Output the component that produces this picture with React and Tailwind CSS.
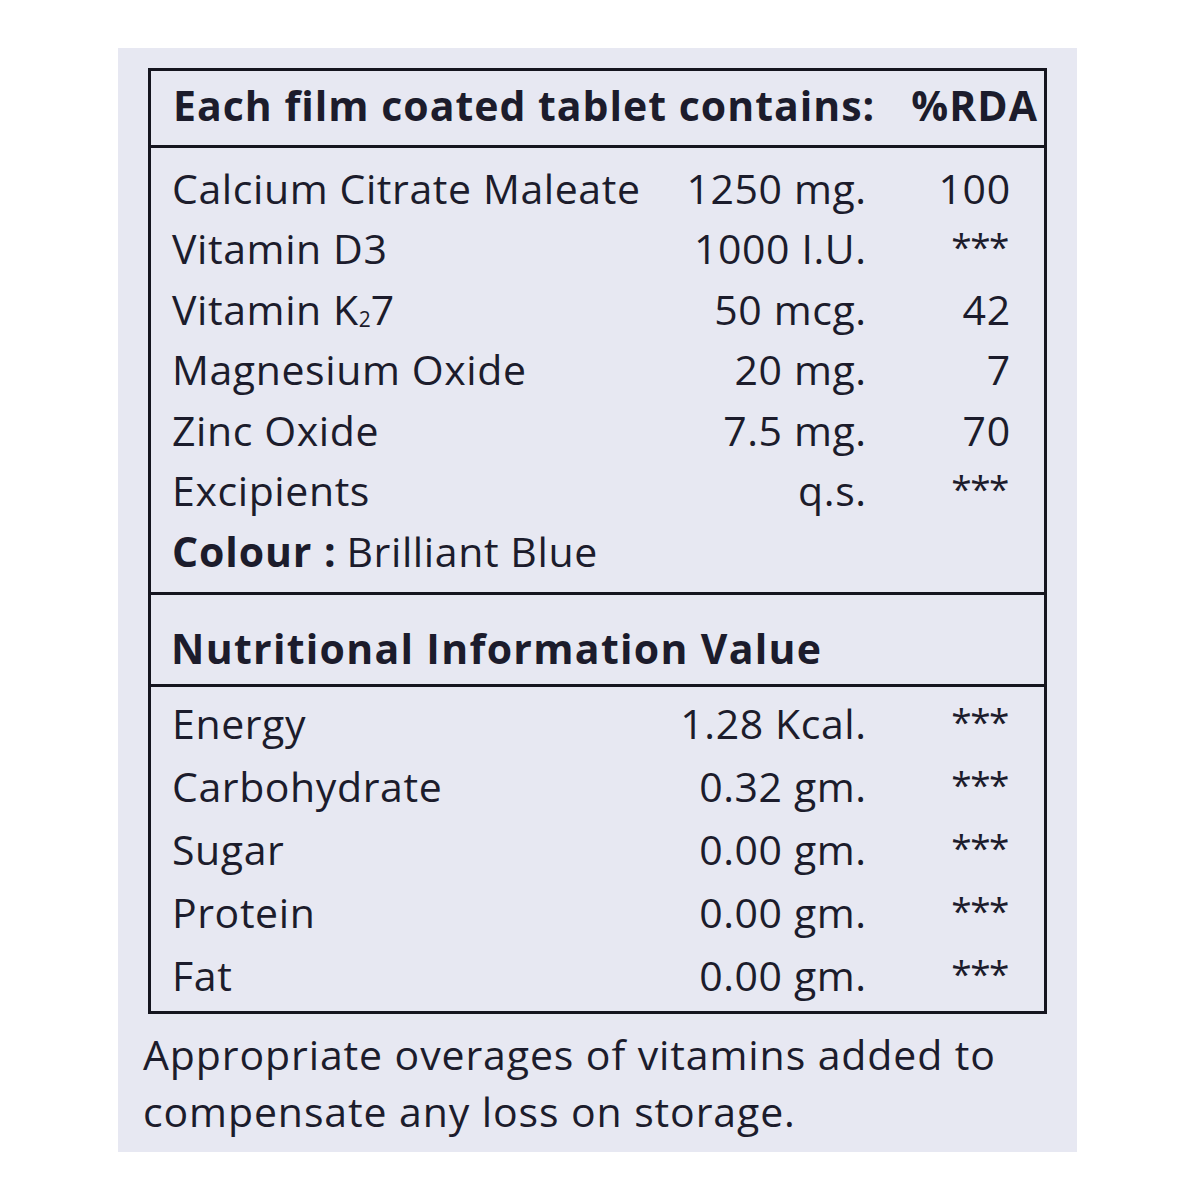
import React from "react";

const font = { fontFamily: '"Open Sans", "Noto Sans", sans-serif' };

const ingredients = [
  ["Calcium Citrate Maleate", "1250 mg.", "100"],
  ["Vitamin D3", "1000 I.U.", "***"],
  ["K27", "50 mcg.", "42"],
  ["Magnesium Oxide", "20 mg.", "7"],
  ["Zinc Oxide", "7.5 mg.", "70"],
  ["Excipients", "q.s.", "***"],
];

const nutrition = [
  ["Energy", "1.28 Kcal.", "***"],
  ["Carbohydrate", "0.32 gm.", "***"],
  ["Sugar", "0.00 gm.", "***"],
  ["Protein", "0.00 gm.", "***"],
  ["Fat", "0.00 gm.", "***"],
];

function Name({ n }) {
  if (n === "K27") {
    return (
      <span>
        Vitamin K<span className="text-[21px] align-[-2px] tracking-normal">2</span>7
      </span>
    );
  }
  return <span>{n}</span>;
}

function Row({ r, h }) {
  const stars = r[2] === "***";
  return (
    <div className={`grid grid-cols-[1fr_auto_144px] items-center ${h}`}>
      <Name n={r[0]} />
      <span className="text-right mr-[-0.7px]">{r[1]}</span>
      {stars ? (
        <span className="text-right text-[37px] tracking-[-1.5px] mr-[2px] -mt-[6px]">***</span>
      ) : (
        <span className="text-right mr-[-0.7px]">{r[2]}</span>
      )}
    </div>
  );
}

export default function App() {
  return (
    <div className="w-[1200px] h-[1200px] bg-white pt-[48px] pl-[118px]" style={font}>
      <div className="w-[959px] h-[1104px] bg-[#e7e8f2] pt-[20px] pl-[30px] text-[#1c1c2c]">
        <div className="w-[899px] border-[3px] border-[#15151f]">
          <div className="h-[77px] flex items-center justify-between pl-[22px] pr-[6px] pb-[4px] text-[41px] font-bold tracking-[1px] border-b-[3px] border-[#15151f]">
            <span>Each film coated tablet contains:</span>
            <span>%RDA</span>
          </div>
          <div className="pl-[21px] pr-[34px] pt-[10px] pb-[10px] text-[41px] leading-none tracking-[0.6px]">
            {ingredients.map((r) => (
              <Row key={r[0]} r={r} h="h-[60.5px]" />
            ))}
            <div className="h-[60.5px] flex items-center">
              <span className="font-bold tracking-[0.9px]">Colour :</span>
              <span className="ml-[10px]">Brilliant Blue</span>
            </div>
          </div>
          <div className="h-[95px] flex items-center pl-[20px] pt-[20px] text-[41px] font-bold tracking-[1.3px] border-y-[3px] border-[#15151f]">
            Nutritional Information Value
          </div>
          <div className="pl-[21px] pr-[34px] pt-[5px] pb-[4px] text-[41px] leading-none tracking-[0.6px]">
            {nutrition.map((r) => (
              <Row key={r[0]} r={r} h="h-[63px]" />
            ))}
          </div>
        </div>
        <div className="-ml-[5px] mt-[12px] text-[41px] leading-[57px] tracking-[0.9px]">
          <div>Appropriate overages of vitamins added to</div>
          <div>compensate any loss on storage.</div>
        </div>
      </div>
    </div>
  );
}
